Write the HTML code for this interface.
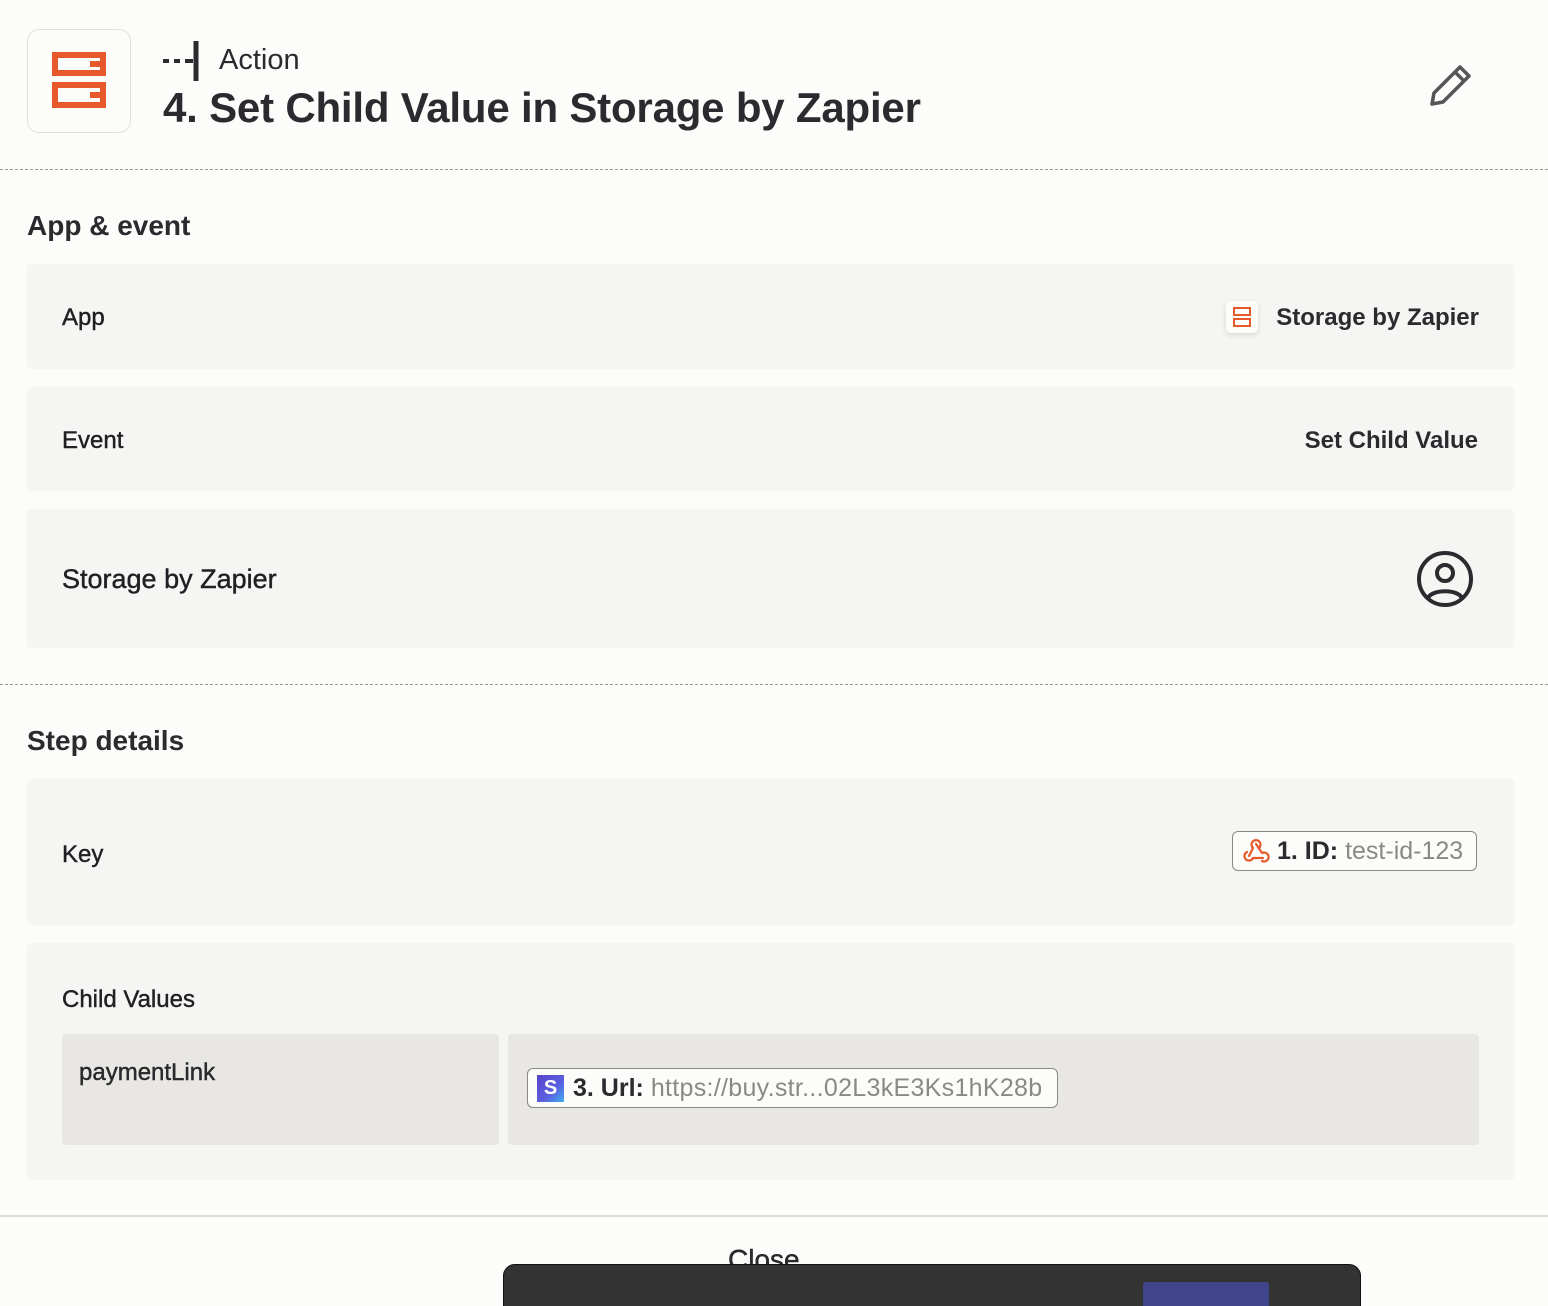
<!DOCTYPE html>
<html style="overflow:hidden;height:1306px"><head><style>
body{margin:0;width:1548px;height:1306px;background:#fcfcfa;font-family:"Liberation Sans",sans-serif;color:#2b2a2f;position:relative;overflow:hidden}
.a{position:absolute}
.card{position:absolute;left:27px;width:1487px;background:#f5f5f3;border-radius:4px}
.lbl{position:absolute;left:35px;font-size:24px;color:#202024;-webkit-text-stroke:0.4px #202024}
.val{position:absolute;right:36px;font-size:24px;font-weight:bold}
.dash{position:absolute;left:0;width:1548px;height:0;border-top:1.5px dashed #9a9995}
h2{position:absolute;left:27px;margin:0;font-size:28px;font-weight:bold}
.pill{position:absolute;border:1.5px solid #8a8985;border-radius:6px;background:#fcfcfa;font-size:25px;height:40px;box-sizing:border-box;display:flex;align-items:center;padding:0 10px;white-space:nowrap}
</style></head><body>
<div class="a" style="left:27px;top:29px;width:102px;height:102px;border:1px solid #e2e1dd;border-radius:12px;background:#fcfcfa"></div>
<svg class="a" style="left:52px;top:52px" width="54" height="58" viewBox="0 0 54 58"><g fill="none" stroke="#e6592a" stroke-width="6"><path d="M3 3h48v18H3z"/><path d="M3 33h48v20H3z"/></g><path d="M38 9h13v6H38zM38 40h13v6H38z" fill="#e6592a"/></svg>
<svg class="a" style="left:163px;top:40px" width="38" height="42"><path d="M0 21h6M11 21h6M22 21h8" stroke="#2b2a2f" stroke-width="4"/><path d="M33 1v40" stroke="#2b2a2f" stroke-width="5"/></svg>
<div class="a" style="left:219px;top:44px;font-size:29px">Action</div>
<div class="a" style="left:163px;top:84px;font-size:42px;font-weight:bold;letter-spacing:-0.2px">4. Set Child Value in Storage by Zapier</div>
<svg class="a" style="left:1428px;top:62px" width="46" height="46" viewBox="0 0 46 46"><path d="M4 42l2-11L32 5l9 9-26 26z M27 10l9 9" fill="none" stroke="#555" stroke-width="3.5" stroke-linejoin="round"/></svg>
<div class="dash" style="top:169px"></div>
<h2 style="top:210px">App &amp; event</h2>
<div class="card" style="top:264px;height:105px"><div class="lbl" style="top:40px">App</div>
<div class="a" style="left:1199px;top:37px;width:32px;height:32px;background:#fcfcfa;border-radius:5px;box-shadow:0 2px 6px rgba(0,0,0,.12)"></div>
<svg class="a" style="left:1206px;top:43px" width="18" height="20"><g fill="none" stroke="#e6592a" stroke-width="2"><rect x="1" y="1" width="16" height="7"/><rect x="1" y="12" width="16" height="7"/></g></svg>
<div class="val" style="top:40px;right:35px">Storage by Zapier</div></div>
<div class="card" style="top:387px;height:104px"><div class="lbl" style="top:40px">Event</div><div class="val" style="top:40px">Set Child Value</div></div>
<div class="card" style="top:509px;height:139px"><div class="lbl" style="top:55px;font-size:27px">Storage by Zapier</div>
<svg class="a" style="left:1388px;top:40px" width="60" height="60" viewBox="0 0 60 60"><circle cx="30" cy="30" r="26" fill="none" stroke="#2b2a2f" stroke-width="4"/><circle cx="30" cy="24" r="8" fill="none" stroke="#2b2a2f" stroke-width="4"/><path d="M13 49c4-9 30-9 34 0" fill="none" stroke="#2b2a2f" stroke-width="4"/></svg></div>
<div class="dash" style="top:684px"></div>
<h2 style="top:725px">Step details</h2>
<div class="card" style="top:779px;height:146px"><div class="lbl" style="top:62px">Key</div>
<div class="pill" style="left:1205px;top:52px;width:245px"><svg width="28" height="26" viewBox="0 0 28 26" style="margin-right:6px"><g fill="none" stroke="#e6592a" stroke-width="2.2" stroke-linecap="round" stroke-linejoin="round"><path d="M16 10a4.5 4.5 0 1 0-6 0L6 18"/><path d="M4 14a4.5 4.5 0 1 0 6 6h10"/><path d="M13 6l6 9a4.5 4.5 0 1 1 0 8"/></g></svg><b>1. ID:</b>&nbsp;<span style="color:#8a8985">test-id-123</span></div></div>
<div class="card" style="top:943px;height:237px"><div class="lbl" style="top:43px">Child Values</div>
<div class="a" style="left:35px;top:91px;width:437px;height:111px;background:#e8e7e4;border-radius:4px"><div class="a" style="left:17px;top:25px;font-size:24px;-webkit-text-stroke:0.4px #202024">paymentLink</div></div>
<div class="a" style="left:481px;top:91px;width:971px;height:111px;background:#e8e7e4;border-radius:4px">
<div class="pill" style="left:19px;top:34px;width:531px;padding-left:9px"><span style="display:inline-block;width:27px;height:27px;background:linear-gradient(135deg,#5a44c8,#5a60e0 60%,#40b0f0);color:#fff;font-weight:bold;font-size:20px;text-align:center;line-height:27px;margin-right:9px">S</span><b>3. Url:</b>&nbsp;<span style="color:#8a8985;letter-spacing:0.3px">https://buy.str...02L3kE3Ks1hK28b</span></div></div></div>
<div class="a" style="left:0;top:1215px;width:1548px;border-top:2px solid #dcdbd7"></div>
<div class="a" style="left:728px;top:1244px;font-size:28px;-webkit-text-stroke:0.4px #202024">Close</div>
<div class="a" style="left:503px;top:1264px;width:856px;height:60px;background:#333;border-radius:12px;border:1px solid #111;overflow:hidden"><div class="a" style="left:639px;top:17px;width:126px;height:50px;background:#3f448b;border-radius:3px"></div></div>
</body></html>
